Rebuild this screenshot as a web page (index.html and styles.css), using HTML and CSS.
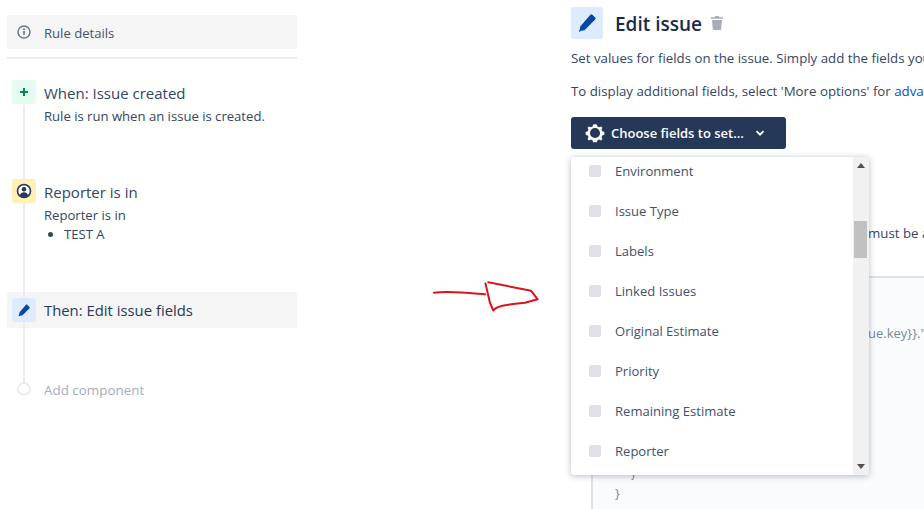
FILE: index.html
```html
<!DOCTYPE html>
<html lang="en">
<head>
<meta charset="utf-8">
<title>Edit issue</title>
<link rel="stylesheet" href="styles.css">
</head>
<body>
<div class="page">
  <aside class="rule">
    <div class="details">
      <svg class="info" viewBox="0 0 16 16"><circle cx="8" cy="8" r="6" fill="none" stroke="#6b778c" stroke-width="1.5"/><rect x="7.2" y="7" width="1.6" height="4" fill="#6b778c"/><circle cx="8" cy="5.2" r="1" fill="#6b778c"/></svg>
      <span>Rule details</span>
    </div>
    <div class="steps">
      <div class="rail"></div>
      <div class="step step-when">
        <div class="badge badge-green"><svg viewBox="0 0 24 24"><path d="M12 8v8M8 12h8" stroke="#00875a" stroke-width="2" fill="none"/></svg></div>
        <div>
          <div class="step-title">When: Issue created</div>
          <div class="step-text">Rule is run when an issue is created.</div>
        </div>
      </div>
      <div class="step step-if">
        <div class="badge badge-yellow"><svg viewBox="0 0 24 24"><circle cx="12" cy="12" r="6.5" fill="#fff" stroke="#253858" stroke-width="1.6"/><circle cx="12" cy="10.3" r="2.3" fill="#253858"/><path d="M7.8 16.4c.6-2.2 2.2-3.2 4.2-3.2s3.6 1 4.2 3.2c-1 1.1-2.5 1.8-4.2 1.8s-3.2-.7-4.2-1.8z" fill="#253858"/></svg></div>
        <div>
          <div class="step-title">Reporter is in</div>
          <div class="step-text">Reporter is in</div>
          <ul class="values"><li>TEST A</li></ul>
        </div>
      </div>
      <div class="step step-then">
        <div class="badge badge-blue"><svg viewBox="0 0 24 24"><path d="M15 6.600l2.400 2.400a1 1 0 0 1 0 1.400l-6.900 6.800-2.200.5-1.800.6.600-1.800.5-2.200 6.600-7.700a.6.600 0 0 1 .8 0z" fill="#0747a6"/></svg></div>
        <div class="step-title step-title-dark">Then: Edit issue fields</div>
      </div>
      <div class="step step-add">
        <div class="add-dot"></div>
        <div class="add-label">Add component</div>
      </div>
    </div>
  </aside>

  <main class="editor">
    <header class="editor-head">
      <div class="head-icon"><svg viewBox="0 0 32 32"><path d="M21.400 7.800l2.800 2.800a1.400 1.400 0 0 1 0 2L13.500 23.200l-3 .6-2.700 1.200 1-2.800.6-3L19.400 7.800a1.400 1.400 0 0 1 2 0z" fill="#0747a6"/></svg></div>
      <h1>Edit issue</h1>
      <svg class="trash" viewBox="0 0 12 14"><path d="M4.200 0h3.600l.5 1.200H12v1.600H0V1.200h3.700zM1 4h10l-.8 9a1 1 0 0 1-1 1H2.800a1 1 0 0 1-1-1z" fill="#a5adba"/></svg>
    </header>
    <p class="lede">Set values for fields on the issue. Simply add the fields you want to set and configure them.</p>
    <p class="lede">To display additional fields, select 'More options' for <a href="#">advanced field editing</a></p>
    <button class="choose" type="button">
      <svg class="gear" viewBox="0 0 24 24"><path d="M12 2.500l2 .2.700 2.300 1.700.8 2.200-1 1.500 1.500-1 2.200.8 1.700 2.300.7v3.100l-2.300.7-.8 1.700 1 2.200-1.500 1.500-2.200-1-1.700.8-.7 2.300h-4l-.7-2.300-1.700-.8-2.200 1-1.500-1.500 1-2.200-.8-1.700-2.300-.7v-3.100l2.300-.7.8-1.700-1-2.200 1.500-1.500 2.200 1 1.700-.8.700-2.300z" fill="#fff"/><circle cx="12" cy="12" r="5.500" fill="#253858"/></svg>
      <span>Choose fields to set...</span>
      <svg class="chev" viewBox="0 0 10 10"><path d="M1.500 3.200L5 6.700l3.500-3.500" fill="none" stroke="#fff" stroke-width="1.800"/></svg>
    </button>
    <p class="note">must be a</p>
    <section class="code">
      <div class="code-key">ue.key}}."</div>
      <div class="code-close">}</div>
      <div class="code-end">}</div>
      <div class="code-final">}</div>
    </section>

    <div class="dropdown">
      <ul class="options">
        <li><span class="check"></span>Environment</li>
        <li><span class="check"></span>Issue Type</li>
        <li><span class="check"></span>Labels</li>
        <li><span class="check"></span>Linked Issues</li>
        <li><span class="check"></span>Original Estimate</li>
        <li><span class="check"></span>Priority</li>
        <li><span class="check"></span>Remaining Estimate</li>
        <li><span class="check"></span>Reporter</li>
      </ul>
      <div class="scrollbar">
        <span class="arrow-up"></span>
        <span class="thumb"></span>
        <span class="arrow-down"></span>
      </div>
    </div>
  </main>

  <svg class="scribble" viewBox="0 0 125 50"><path d="M9 22.700C25 20.500 45 23 60 24.300M60.500 13.500L65 33L68.300 40.500C72 36 78 35 100 32.700L112.700 29.300L106 20.700L63.300 12.300" fill="none" stroke="#d8141c" stroke-width="2" stroke-linejoin="round" stroke-linecap="round"/></svg>
</div>
</body>
</html>
```
FILE: styles.css
```css
* { box-sizing: border-box; }
html, body { margin: 0; height: 100%; background: #fff; }
body { overflow: hidden; font-family: "Open Sans", "Noto Sans", sans-serif; color: #172b4d; }
.page { position: relative; display: flex; width: 924px; height: 509px; overflow: hidden; padding-left: 7px; }
.rule { flex: none; width: 290px; padding-top: 15px; }
.details { display: flex; align-items: center; height: 34px; padding: 1px 0 0 9px; gap: 12px; background: #f5f5f6; border-radius: 3px; font-size: 13.100px; color: #42526e; }
.info { width: 16px; height: 16px; margin-top: -1px; }
.steps { position: relative; margin-top: 8px; border-top: 2px solid #ebecf0; }
.rail { position: absolute; z-index: 1; left: 16px; top: 46px; width: 2px; height: 285px; background: #ebecf0; }
.step { position: relative; display: flex; gap: 8px; padding-left: 5px; }
.step-when { margin-top: 21px; height: 99px; }
.step-if { height: 113px; }
.step-then { align-items: center; height: 36px; background: #f5f5f6; border-radius: 3px; }
.step-add { align-items: center; margin-top: 51px; height: 20px; }
.badge { position: relative; z-index: 2; flex: none; display: flex; width: 24px; height: 24px; border-radius: 3px; }
.badge svg { width: 24px; height: 24px; }
.badge-green { background: #e3fcef; }
.badge-yellow { background: #fff0b3; }
.badge-blue { background: #deebff; }
.step-title { font-size: 15px; line-height: 26px; color: #344563; }
.step-title-dark { font-size: 14.850px; color: #253858; }
.step-text { font-size: 13.100px; line-height: 20px; color: #344563; }
.values { margin: -1px 0 0; padding-left: 20px; font-size: 13.100px; line-height: 20px; color: #344563; }
.add-dot { position: relative; z-index: 2; flex: none; width: 14px; height: 14px; margin: 0 5px; background: #fff; border: 2px solid #ebecf0; border-radius: 50%; }
.add-label { padding-top: 2px; font-size: 13.400px; color: #a5adba; }
.editor { position: relative; flex: none; width: 353px; margin-left: 274px; padding-top: 7px; }
.editor-head { display: flex; align-items: center; height: 32px; }
.head-icon { flex: none; width: 32px; height: 32px; background: #deebff; border-radius: 3px; }
.head-icon svg { display: block; width: 32px; height: 32px; }
h1 { margin: 0 0 0 12px; padding-top: 2px; font-size: 19px; font-weight: 600; color: #172b4d; }
.trash { width: 12px; height: 14px; margin-left: 9px; }
.lede { margin: 0; font-size: 13.280px; line-height: 20px; white-space: nowrap; color: #344563; }
.editor-head + .lede { margin-top: 9px; }
.lede + .lede { margin-top: 13px; }
.lede a { color: #0052cc; text-decoration: none; }
.choose { display: flex; align-items: center; width: 215px; height: 32px; margin-top: 16px; padding: 0 0 0 13px; border: 0; border-radius: 3px; background: #253858; color: #fff; font: 600 13px "Open Sans", "Noto Sans", sans-serif; }
.gear { width: 22px; height: 22px; }
.choose span { margin-left: 5px; }
.chev { width: 10px; height: 10px; margin-left: 11px; }
.note { margin: 74px 0 0 297px; font-size: 13.280px; line-height: 20px; white-space: nowrap; color: #344563; }
.code { height: 240px; margin: 33px 0 0 20px; padding-left: 22px; background: #fafbfc; border-top: 2px solid #dfe1e6; border-left: 2px solid #dfe1e6; font-size: 13px; color: #7a869a; position: relative; }
.code-key { margin: 45px 0 0 253px; line-height: 20px; white-space: nowrap; }
.code-close { margin: 120px 0 0 16px; line-height: 20px; }
.code-end { line-height: 20px; }
.code-final { margin-left: -17px; line-height: 20px; }
.dropdown { position: absolute; left: 0; top: 157px; display: flex; width: 298px; height: 318px; overflow: hidden; background: #fff; border-radius: 3px; box-shadow: 0 1px 6px rgba(9, 30, 66, .3); }
.options { flex: 1; margin: 0; padding: 0; list-style: none; }
.options li { display: flex; align-items: center; height: 40px; margin-top: -6px; margin-bottom: 6px; padding-left: 18px; font-size: 13.050px; color: #42526e; }
.check { flex: none; width: 12px; height: 12px; margin-right: 14px; background: #dfe1e6; border-radius: 2px; }
.scrollbar { position: relative; flex: none; width: 16px; background: #f1f1f1; }
.thumb { position: absolute; left: 1px; top: 64px; width: 13px; height: 37px; background: #c1c1c1; }
.arrow-up, .arrow-down { position: absolute; left: 4px; width: 0; height: 0; border-left: 4px solid transparent; border-right: 4px solid transparent; }
.arrow-up { top: 6px; border-bottom: 5px solid #505050; }
.arrow-down { bottom: 6px; border-top: 5px solid #505050; }
.scribble { position: absolute; left: 425px; top: 270px; width: 125px; height: 50px; }
```
